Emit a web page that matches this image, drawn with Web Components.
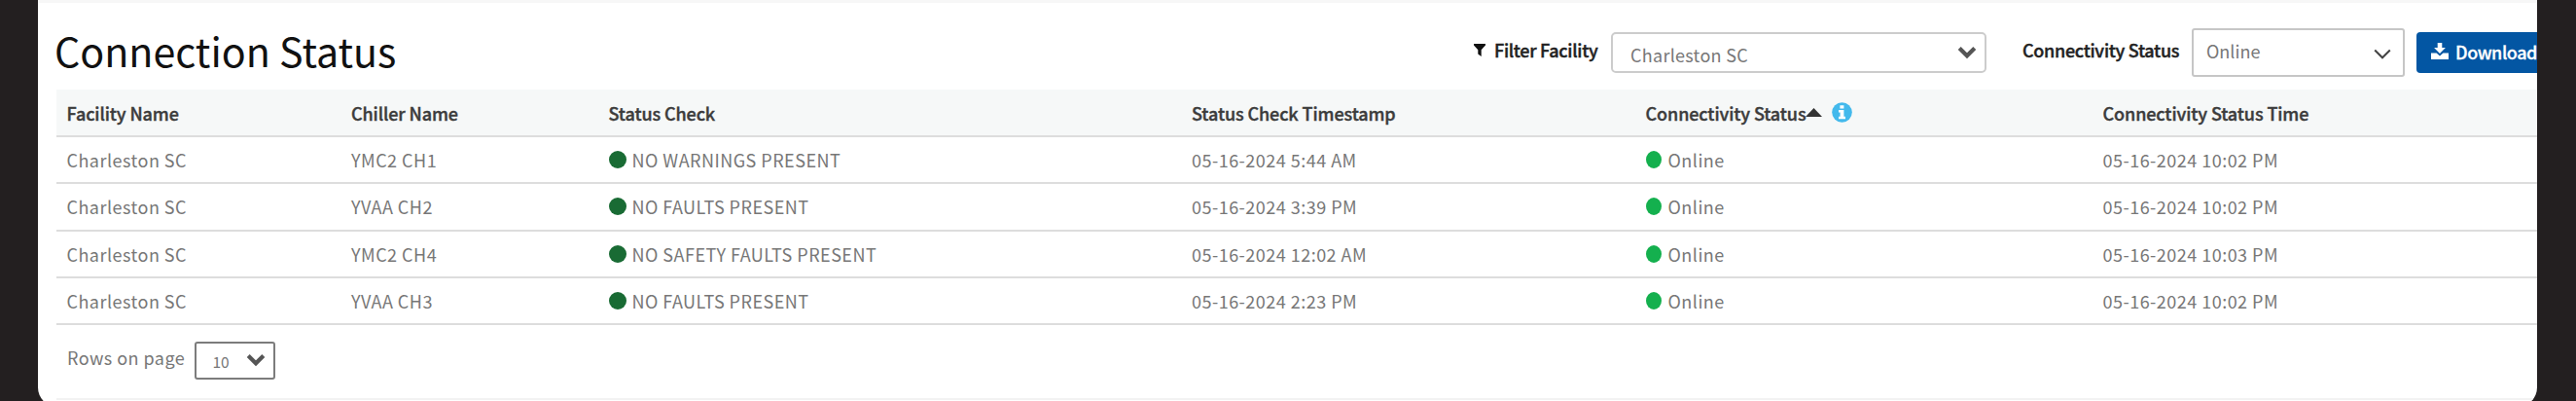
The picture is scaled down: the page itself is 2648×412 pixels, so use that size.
<!DOCTYPE html>
<html lang="en">
<head>
<meta charset="utf-8">
<title>Connection Status</title>
<style>
    body {
        margin: 0;
        background: #231f20;
        font-family: "Noto Sans CJK SC", "Noto Sans", sans-serif;
        overflow: hidden;
    }
</style>
</head>
<body>
<connection-status></connection-status>
<script>
function define(name, html, render) {
    const template = document.createElement('template');
    template.innerHTML = html;

    customElements.define(name, class extends HTMLElement {
        constructor() {
            super();
            this.attachShadow({mode: "open"});
            this.shadowRoot.appendChild(template.content.cloneNode(true));
        }

        connectedCallback() {
            if (render) render(this, this.shadowRoot);
        }
    });
}

define('status-dot', /*html*/ `
    <style>
        :host {
            display: block;
            flex: none;
            width: var(--dot-width, 18px);
            height: 18px;
            margin-right: 6px;
            border-radius: 50%;
            background: var(--dot-color, #196b34);
        }
        :host([online]) {
            --dot-color: #14b04e;
            --dot-width: 16px;
            margin-right: 7px;
        }
    </style>
`);

define('select-box', /*html*/ `
    <style>
        :host {
            display: flex;
            box-sizing: border-box;
            align-items: center;
            justify-content: space-between;
            border: 2px solid #ccc;
            border-radius: 5px;
            background: #fff;
            color: #777;
            font-size: 18px;
            line-height: 24px;
            white-space: nowrap;
        }
        span { padding-bottom: var(--text-rise, 0); }
        svg {
            flex: none;
            width: 20px;
            height: 14px;
            margin-bottom: 3px;
            fill: none;
            stroke: #555;
            stroke-width: 4.2;
        }
        :host([thin]) svg {
            margin: 4px 0 0;
            stroke: #444;
            stroke-width: 2;
        }
    </style>
    <span><slot></slot></span>
    <svg viewBox="0 0 20 14"><path d="M2.2 2.5 10 10.3 17.8 2.5"/></svg>
`);

define('download-button', /*html*/ `
    <style>
        :host {
            display: block;
            flex: none;
        }
        button {
            display: flex;
            align-items: center;
            box-sizing: border-box;
            width: 140px;
            height: 42px;
            padding: 0 0 2px 15px;
            border: 0;
            border-radius: 4px;
            background: #0356a3;
            color: #fff;
            font: 500 18px/24px "Noto Sans CJK SC", "Noto Sans", sans-serif;
            letter-spacing: -0.45px;
            -webkit-text-stroke: 0.3px;
        }
        svg {
            width: 18px;
            height: 17px;
            margin: -1px 7px 0 0;
            fill: #fff;
        }
    </style>
    <button>
        <svg viewBox="0 0 18 17"><path d="M6.7 0h4.6v5h3.6L9 11 3.1 5h3.6zM0 10.5h5.6L9 13.6l3.4-3.1H18V17H0z"/></svg>
        <slot></slot>
    </button>
`);

define('filter-bar', /*html*/ `
    <style>
        :host {
            display: flex;
            align-items: center;
        }
        label {
            display: flex;
            flex: none;
            align-items: center;
            box-sizing: border-box;
            padding-bottom: 6px;
            color: #222;
            font-weight: 500;
            font-size: 18px;
            line-height: 24px;
            letter-spacing: -0.3px;
            -webkit-text-stroke: 0.4px;
            white-space: nowrap;
        }
        .facility { width: 141px; }
        .status { width: 174px; margin-left: 37px; }
        .funnel {
            flex: none;
            width: 12px;
            height: 13px;
            margin-right: 9px;
            fill: #111;
        }
        select-box { flex: none; }
        .facility-select {
            width: 386px;
            height: 42px;
            padding: 3px 8px 0 18px;
            letter-spacing: 0.28px;
        }
        .status-select {
            --text-rise: 5px;
            width: 219px;
            height: 50px;
            margin-right: 12px;
            padding: 0 11px 0 13px;
            border-color: #c6c6c6;
            border-radius: 3px;
        }
    </style>
    <label class="facility">
        <svg class="funnel" viewBox="0 0 12 13"><path d="M0 0h12v1.5L7.7 6.2V13L4.3 10.6V6.2L0 1.5z"/></svg>
        Filter Facility
    </label>
    <select-box class="facility-select">Charleston SC</select-box>
    <label class="status">Connectivity Status</label>
    <select-box class="status-select" thin>Online</select-box>
    <download-button>Download</download-button>
`);

define('info-icon', /*html*/ `
    <style>
        :host { display: block; }
        svg { display: block; width: 21px; height: 21px; }
    </style>
    <svg viewBox="0 0 21 21">
        <circle cx="10.5" cy="10.5" r="10.3" fill="#43b9ec"/>
        <path fill="#fff" d="M8.4 3.3h4v3.1h-4zM7 8h5.4v6.7H14v2.5H7v-2.5h1.6v-4.2H7z"/>
    </svg>
`);

define('status-table', /*html*/ `
    <style>
        :host {
            display: block;
            font-size: 18px;
            color: #777;
        }
        .row {
            display: grid;
            grid-template-columns: 292.5px 264.5px 599.5px 466.5px 470px 1fr;
            align-items: center;
            box-sizing: border-box;
            height: 48.25px;
            padding-left: 10.5px;
            border-bottom: 2px solid #ddd;
            line-height: 24px;
            letter-spacing: 0.48px;
            white-space: nowrap;
        }
        .head {
            height: 49px;
            background: #f6f8f8;
            color: #3c3c3c;
            font-weight: 500;
            letter-spacing: -0.1px;
            -webkit-text-stroke: 0.4px;
        }
        .cell { display: flex; align-items: center; }
        .sort { width: 17px; height: 9px; margin-right: 10px; fill: #333; }
    </style>
    <div class="row head">
        <div class="cell">Facility Name</div>
        <div class="cell">Chiller Name</div>
        <div class="cell">Status Check</div>
        <div class="cell">Status Check Timestamp</div>
        <div class="cell">Connectivity Status<svg class="sort" viewBox="0 0 17 9"><path d="M8.5 0 17 9H0z"/></svg><info-icon></info-icon></div>
        <div class="cell">Connectivity Status Time</div>
    </div>
`, (host, root) => {
    const rows = [
        ['YMC2 CH1', 'NO WARNINGS PRESENT', '5:44 AM', '10:02 PM'],
        ['YVAA CH2', 'NO FAULTS PRESENT', '3:39 PM', '10:02 PM'],
        ['YMC2 CH4', 'NO SAFETY FAULTS PRESENT', '12:02 AM', '10:03 PM'],
        ['YVAA CH3', 'NO FAULTS PRESENT', '2:23 PM', '10:02 PM']
    ];
    rows.forEach(([chiller, check, checked, connected]) => {
        const row = document.createElement('div');
        row.className = 'row';
        row.innerHTML = `
            <div class="cell">Charleston SC</div>
            <div class="cell">${chiller}</div>
            <div class="cell"><status-dot></status-dot>${check}</div>
            <div class="cell">05-16-2024 ${checked}</div>
            <div class="cell"><status-dot online></status-dot>Online</div>
            <div class="cell">05-16-2024 ${connected}</div>
        `;
        root.appendChild(row);
    });
});

define('page-size', /*html*/ `
    <style>
        :host {
            display: flex;
            align-items: center;
            height: 39px;
            color: #777;
            font-size: 18px;
            line-height: 24px;
        }
        label {
            width: 130.5px;
            margin-top: -7px;
            letter-spacing: 0.45px;
            white-space: nowrap;
        }
        select-box {
            --text-rise: 1px;
            width: 83px;
            height: 39px;
            padding: 1px 8px 0 17px;
            border-color: #7c7c7c;
            border-radius: 3px;
            font-size: 15.5px;
        }
    </style>
    <label>Rows on page</label>
    <select-box>10</select-box>
`);

define('connection-status', /*html*/ `
    <style>
        :host {
            display: block;
            box-sizing: border-box;
            width: 2569px;
            height: 418px;
            margin-left: 39px;
            padding-left: 19px;
            border-top: 3px solid #f7f7f7;
            border-radius: 0 0 20px 20px;
            background: #fff;
            overflow: hidden;
        }
        header {
            display: flex;
            justify-content: space-between;
            height: 89px;
        }
        h1 {
            margin: 18px 0 0 -2px;
            font-weight: 400;
            font-size: 41.2px;
            line-height: 60px;
            color: #111;
            white-space: nowrap;
        }
        filter-bar { height: 50px; margin: 26px -16px 0 0; }
        page-size { margin: 17px 0 0 11px; }
        footer { margin: 19px 4px 0 0; border-top: 2px solid #f2f2f2; }
    </style>
    <header>
        <h1>Connection Status</h1>
        <filter-bar></filter-bar>
    </header>
    <status-table></status-table>
    <page-size></page-size>
    <footer></footer>
`);
</script>
</body>
</html>
